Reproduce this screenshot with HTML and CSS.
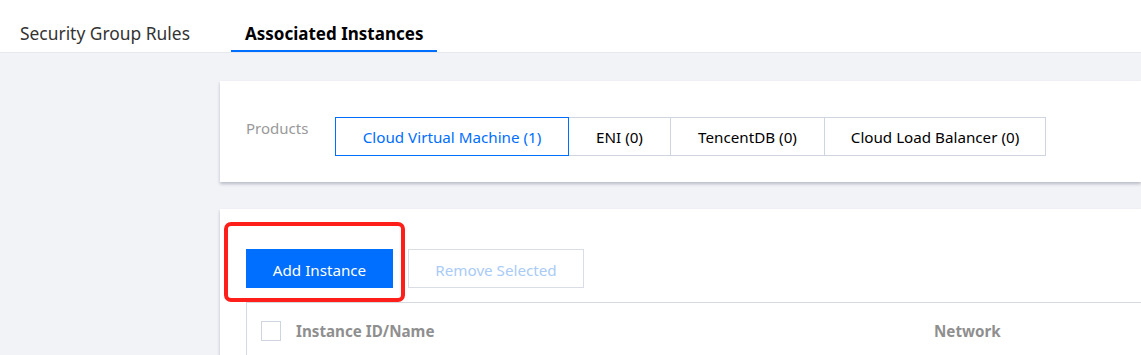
FILE: index.html
```html
<!DOCTYPE html>
<html lang="en">
<head>
<meta charset="UTF-8">
<title>Associated Instances</title>
<link rel="stylesheet" href="styles.css">
</head>
<body>
<div class="tabs">
    <div class="tab">Security Group Rules</div>
    <div class="tab active">Associated Instances</div>
</div>

<div class="main">
    <div class="card products">
        <div class="label">Products</div>
        <div class="segments">
            <div class="segment selected">Cloud Virtual Machine (1)</div>
            <div class="segment eni">ENI (0)</div>
            <div class="segment db">TencentDB (0)</div>
            <div class="segment clb">Cloud Load Balancer (0)</div>
        </div>
    </div>

    <div class="card list">
        <div class="toolbar">
            <div class="btn primary">Add Instance</div>
            <div class="btn disabled">Remove Selected</div>
            <div class="highlight"></div>
        </div>
        <table class="grid">
            <tr>
                <th class="check"><span class="checkbox"></span></th>
                <th class="name">Instance ID/Name</th>
                <th class="net">Network</th>
            </tr>
        </table>
    </div>
</div>
</body>
</html>
```

FILE: styles.css
```css
body {
    margin: 0;
    background: #f2f3f7;
    font-family: "Noto Sans", "Open Sans", sans-serif;
    color: #000;
    overflow: hidden;
}

.tabs {
    display: flex;
    height: 53px;
    padding-left: 6px;
    background: #fff;
    border-bottom: 1px solid #e6e8ee;
    box-sizing: border-box;
}
.tab {
    padding: 17px 14px 0;
    font-size: 17.4px;
    line-height: 33px;
    color: #333;
    border-bottom: 2px solid transparent;
    margin-right: 27px;
}
.tab.active {
    font-weight: bold;
    font-size: 17px;
    color: #000;
    border-bottom-color: #006eff;
}

.main {
    padding: 28px 0 0 220px;
}
.card {
    background: #fff;
    box-shadow: 0 2px 3px 0 rgba(54, 58, 80, 0.3);
}

.products {
    display: flex;
    height: 101px;
    padding: 36px 26px 0;
    box-sizing: border-box;
}
.label {
    width: 89px;
    font-size: 15px;
    color: #999;
    line-height: 22px;
}
.segments {
    display: flex;
    height: 39px;
}
.segment {
    border: 1px solid #cfd5de;
    border-left: none;
    font-size: 15.2px;
    line-height: 38px;
    text-align: center;
    color: #000;
}
.segment.selected {
    width: 232px;
    border: 1px solid #006eff;
    color: #006eff;
}
.segment.eni { width: 101px; }
.segment.db { width: 153px; }
.segment.clb { width: 220px; }

.list {
    margin-top: 27px;
    height: 200px;
    padding: 40px 0 0 26px;
}
.toolbar {
    position: relative;
    display: flex;
    gap: 15px;
    padding-bottom: 14px;
}
.btn {
    height: 39px;
    line-height: 42px;
    font-size: 15.2px;
    text-align: center;
    box-sizing: border-box;
}
.btn.primary {
    width: 147px;
    background: #006eff;
    color: #fff;
}
.btn.disabled {
    width: 176px;
    border: 1px solid #d9dee6;
    line-height: 40px;
    color: #a9cbf6;
}
.highlight {
    position: absolute;
    left: -22px;
    top: -27px;
    width: 181px;
    height: 80px;
    border: 4px solid #ff1f1a;
    border-radius: 7px;
    box-sizing: border-box;
}

.grid {
    width: 100%;
    border-collapse: collapse;
    border-top: 1px solid #d5dae2;
    border-left: 1px solid #d5dae2;
}
.grid th {
    height: 56px;
    padding: 0;
    text-align: left;
    font-size: 15.2px;
    color: #8f8f8f;
    vertical-align: middle;
}
.grid .check {
    width: 35px;
    padding-left: 14px;
}
.checkbox {
    display: block;
    width: 20px;
    height: 20px;
    border: 1px solid #cfd5de;
    box-sizing: border-box;
}
.grid .name {
    width: 638px;
}
```
